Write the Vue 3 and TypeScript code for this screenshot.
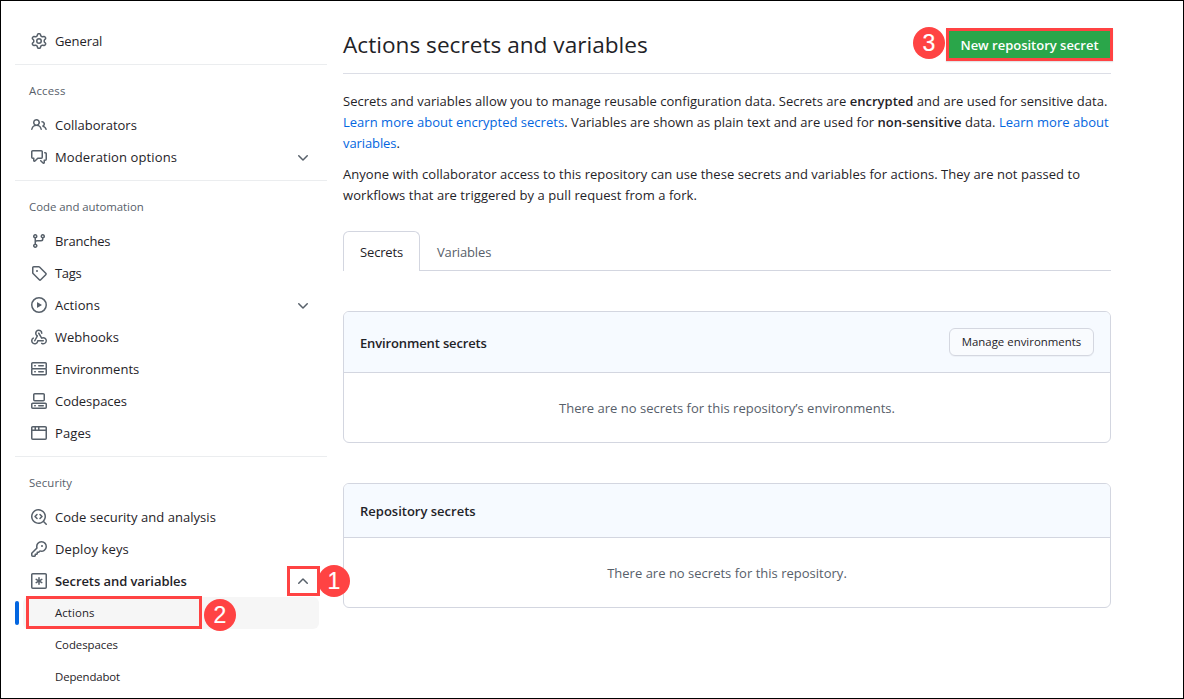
<script setup lang="ts">
interface NavItem {
  label: string
  icon: keyof typeof icons
  ls: number
  toggle?: 'down' | 'up'
  bold?: boolean
}
interface NavGroup {
  title?: string
  titleLs?: number
  items: NavItem[]
}

const icons = {
  gear: ['M8 0a8.2 8.2 0 0 1 .701.031C9.444.095 9.99.645 10.16 1.29l.288 1.107c.018.066.079.158.212.224.231.114.454.243.668.386.123.082.233.09.299.071l1.103-.303c.644-.176 1.392.021 1.82.63.27.385.506.792.704 1.218.315.675.111 1.422-.364 1.891l-.814.806c-.049.048-.098.147-.088.294.016.257.016.515 0 .772-.01.147.038.246.088.294l.814.806c.475.469.679 1.216.364 1.891a7.977 7.977 0 0 1-.704 1.217c-.428.61-1.176.807-1.82.63l-1.102-.302c-.067-.019-.177-.011-.3.071a5.909 5.909 0 0 1-.668.386c-.133.066-.194.158-.211.224l-.29 1.106c-.168.646-.715 1.196-1.458 1.26a8.006 8.006 0 0 1-1.402 0c-.743-.064-1.289-.614-1.458-1.26l-.289-1.106c-.018-.066-.079-.158-.212-.224a5.738 5.738 0 0 1-.668-.386c-.123-.082-.233-.09-.299-.071l-1.103.303c-.644.176-1.392-.021-1.82-.63a8.12 8.12 0 0 1-.704-1.218c-.315-.675-.111-1.422.363-1.891l.815-.806c.05-.048.098-.147.088-.294a6.214 6.214 0 0 1 0-.772c.01-.147-.038-.246-.088-.294l-.815-.806C.635 6.045.431 5.298.746 4.623a7.92 7.92 0 0 1 .704-1.217c.428-.61 1.176-.807 1.82-.63l1.102.302c.067.019.177.011.3-.071.214-.143.437-.272.668-.386.133-.066.194-.158.211-.224l.29-1.106C6.009.645 6.556.095 7.299.03 7.53.01 7.764 0 8 0Zm-.571 1.525c-.036.003-.108.036-.137.146l-.289 1.105c-.147.561-.549.967-.998 1.189-.173.086-.34.183-.5.29-.417.278-.97.423-1.529.27l-1.103-.303c-.109-.03-.175.016-.195.045-.22.312-.412.644-.573.99-.014.031-.021.11.059.19l.815.806c.411.406.562.957.53 1.456a4.709 4.709 0 0 0 0 .582c.032.499-.119 1.05-.53 1.456l-.815.806c-.081.08-.073.159-.059.19.162.346.353.677.573.989.02.03.085.076.195.046l1.102-.303c.56-.153 1.113-.008 1.53.27.161.107.328.204.501.29.447.222.85.629.997 1.189l.289 1.105c.029.109.101.143.137.146a6.6 6.6 0 0 0 1.142 0c.036-.003.108-.036.137-.146l.289-1.105c.147-.561.549-.967.998-1.189.173-.086.34-.183.5-.29.417-.278.97-.423 1.529-.27l1.103.303c.109.029.175-.016.195-.045.22-.313.411-.644.573-.99.014-.031.021-.11-.059-.19l-.815-.806c-.411-.406-.562-.957-.53-1.456a4.709 4.709 0 0 0 0-.582c-.032-.499.119-1.05.53-1.456l.815-.806c.081-.08.073-.159.059-.19a6.464 6.464 0 0 0-.573-.989c-.02-.03-.085-.076-.195-.046l-1.102.303c-.56.153-1.113.008-1.53-.27a4.44 4.44 0 0 0-.501-.29c-.447-.222-.85-.629-.997-1.189l-.289-1.105c-.029-.11-.101-.143-.137-.146a6.6 6.6 0 0 0-1.142 0ZM11 8a3 3 0 1 1-6 0 3 3 0 0 1 6 0ZM9.5 8a1.5 1.5 0 1 0-3.001.001A1.5 1.5 0 0 0 9.5 8Z'],
  people: ['M2 5.5a3.5 3.5 0 1 1 5.898 2.549 5.508 5.508 0 0 1 3.034 4.084.75.75 0 1 1-1.482.235 4 4 0 0 0-7.9 0 .75.75 0 0 1-1.482-.236A5.507 5.507 0 0 1 3.102 8.05 3.493 3.493 0 0 1 2 5.5ZM11 4a3.001 3.001 0 0 1 2.22 5.018 5.01 5.01 0 0 1 2.56 3.012.749.749 0 0 1-.885.954.752.752 0 0 1-.549-.514 3.507 3.507 0 0 0-2.522-2.372.75.75 0 0 1-.574-.73v-.352a.75.75 0 0 1 .416-.672A1.5 1.5 0 0 0 11 5.5.75.75 0 0 1 11 4Zm-5.5-.5a2 2 0 1 0-.001 3.999A2 2 0 0 0 5.5 3.5Z'],
  discussion: ['M1.75 1h8.5c.966 0 1.75.784 1.75 1.75v5.5A1.75 1.75 0 0 1 10.25 10H7.061l-2.574 2.573A1.458 1.458 0 0 1 2 11.543V10h-.25A1.75 1.75 0 0 1 0 8.25v-5.5C0 1.784.784 1 1.75 1ZM1.5 2.75v5.5c0 .138.112.25.25.25h1a.75.75 0 0 1 .75.75v2.19l2.72-2.72a.749.749 0 0 1 .53-.22h3.5a.25.25 0 0 0 .25-.25v-5.5a.25.25 0 0 0-.25-.25h-8.5a.25.25 0 0 0-.25.25Zm13 2a.25.25 0 0 0-.25-.25h-.5a.75.75 0 0 1 0-1.5h.5c.966 0 1.75.784 1.75 1.75v5.5A1.75 1.75 0 0 1 14.25 12H14v1.543a1.458 1.458 0 0 1-2.487 1.03L9.22 12.28a.749.749 0 0 1 .326-1.275.749.749 0 0 1 .734.215l2.22 2.22v-2.19a.75.75 0 0 1 .75-.75h1a.25.25 0 0 0 .25-.25Z'],
  branch: ['M9.5 3.25a2.25 2.25 0 1 1 3 2.122V6A2.5 2.5 0 0 1 10 8.5H6a1 1 0 0 0-1 1v1.128a2.251 2.251 0 1 1-1.5 0V5.372a2.25 2.25 0 1 1 1.5 0v1.836A2.493 2.493 0 0 1 6 7h4a1 1 0 0 0 1-1v-.628A2.25 2.25 0 0 1 9.5 3.25Zm-6 0a.75.75 0 1 0 1.5 0 .75.75 0 0 0-1.5 0Zm8.25-.75a.75.75 0 1 0 0 1.5.75.75 0 0 0 0-1.5ZM4.25 12a.75.75 0 1 0 0 1.5.75.75 0 0 0 0-1.5Z'],
  tag: ['M1 7.775V2.75C1 1.784 1.784 1 2.75 1h5.025c.464 0 .91.184 1.238.513l6.25 6.25a1.75 1.75 0 0 1 0 2.474l-5.026 5.026a1.75 1.75 0 0 1-2.474 0l-6.25-6.25A1.752 1.752 0 0 1 1 7.775Zm1.5 0c0 .066.026.13.073.177l6.25 6.25a.25.25 0 0 0 .354 0l5.025-5.025a.25.25 0 0 0 0-.354l-6.25-6.25a.25.25 0 0 0-.177-.073H2.75a.25.25 0 0 0-.25.25ZM6 5a1 1 0 1 1 0 2 1 1 0 0 1 0-2Z'],
  play: ['M8 0a8 8 0 1 1 0 16A8 8 0 0 1 8 0ZM1.5 8a6.5 6.5 0 1 0 13 0 6.5 6.5 0 0 0-13 0Zm4.879-2.773 4.264 2.559a.25.25 0 0 1 0 .428l-4.264 2.559A.25.25 0 0 1 6 10.559V5.442a.25.25 0 0 1 .379-.215Z'],
  webhook: [
    'M5.5 4.25a2.25 2.25 0 0 1 4.5 0 .75.75 0 0 0 1.5 0 3.75 3.75 0 1 0-6.14 2.889l-2.272 4.258a.75.75 0 0 0 1.324.706L7 7.25a.75.75 0 0 0-.309-1.015A2.25 2.25 0 0 1 5.5 4.25Z',
    'M7.364 3.607a.75.75 0 0 1 1.03.257l2.608 4.349a3.75 3.75 0 1 1-.628 6.785.75.75 0 0 1 .752-1.299 2.25 2.25 0 1 0-.033-3.88.75.75 0 0 1-1.03-.256L7.107 4.636a.75.75 0 0 1 .257-1.03Z',
    'M2.9 8.776A.75.75 0 0 1 2.625 9.8 2.25 2.25 0 1 0 6 11.75a.75.75 0 0 1 .75-.751h5.5a.75.75 0 0 1 0 1.5H7.425a3.751 3.751 0 1 1-5.55-3.998.75.75 0 0 1 1.024.274Z',
  ],
  server: ['M1.75 1h12.5c.966 0 1.75.784 1.75 1.75v4c0 .372-.116.717-.314 1 .198.283.314.628.314 1v4a1.75 1.75 0 0 1-1.75 1.75H1.75A1.75 1.75 0 0 1 0 12.75v-4c0-.358.109-.707.314-1a1.739 1.739 0 0 1-.314-1v-4C0 1.784.784 1 1.75 1ZM1.5 2.75v4c0 .138.112.25.25.25h12.5a.25.25 0 0 0 .25-.25v-4a.25.25 0 0 0-.25-.25H1.75a.25.25 0 0 0-.25.25Zm.25 5.75a.25.25 0 0 0-.25.25v4c0 .138.112.25.25.25h12.5a.25.25 0 0 0 .25-.25v-4a.25.25 0 0 0-.25-.25ZM7 4.75A.75.75 0 0 1 7.75 4h4.5a.75.75 0 0 1 0 1.5h-4.5A.75.75 0 0 1 7 4.75ZM7.75 10h4.5a.75.75 0 0 1 0 1.5h-4.5a.75.75 0 0 1 0-1.5ZM3 4.75A.75.75 0 0 1 3.75 4h.5a.75.75 0 0 1 0 1.5h-.5A.75.75 0 0 1 3 4.75ZM3.75 10h.5a.75.75 0 0 1 0 1.5h-.5a.75.75 0 0 1 0-1.5Z'],
  codespaces: [
    'M0 11.25c0-.966.784-1.75 1.75-1.75h12.5c.966 0 1.75.784 1.75 1.75v3A1.75 1.75 0 0 1 14.25 16H1.75A1.75 1.75 0 0 1 0 14.25Zm2-9.5C2 .784 2.784 0 3.75 0h8.5C13.216 0 14 .784 14 1.75v5a1.75 1.75 0 0 1-1.75 1.75h-8.5A1.75 1.75 0 0 1 2 6.75Zm1.75-.25a.25.25 0 0 0-.25.25v5c0 .138.112.25.25.25h8.5a.25.25 0 0 0 .25-.25v-5a.25.25 0 0 0-.25-.25Zm-2 9.5a.25.25 0 0 0-.25.25v3c0 .138.112.25.25.25h12.5a.25.25 0 0 0 .25-.25v-3a.25.25 0 0 0-.25-.25Z',
    'M7 12.75a.75.75 0 0 1 .75-.75h4.5a.75.75 0 0 1 0 1.5h-4.5a.75.75 0 0 1-.75-.75Zm-4 0a.75.75 0 0 1 .75-.75h.5a.75.75 0 0 1 0 1.5h-.5a.75.75 0 0 1-.75-.75Z',
  ],
  browser: ['M0 2.75C0 1.784.784 1 1.75 1h12.5c.966 0 1.75.784 1.75 1.75v10.5A1.75 1.75 0 0 1 14.25 15H1.75A1.75 1.75 0 0 1 0 13.25ZM14.5 6h-13v7.25c0 .138.112.25.25.25h12.5a.25.25 0 0 0 .25-.25Zm-6-3.5v2h6V2.75a.25.25 0 0 0-.25-.25ZM5 2.5v2h2v-2Zm-3.25 0a.25.25 0 0 0-.25.25V4.5h2v-2Z'],
  codescan: [
    'M8.47 4.97a.75.75 0 0 0 0 1.06L9.94 7.5 8.47 8.97a.75.75 0 1 0 1.06 1.06l2-2a.75.75 0 0 0 0-1.06l-2-2a.75.75 0 0 0-1.06 0ZM6.53 6.03a.75.75 0 0 0-1.06-1.06l-2 2a.75.75 0 0 0 0 1.06l2 2a.75.75 0 1 0 1.06-1.06L5.06 7.5l1.47-1.47Z',
    'M12.246 13.307a7.5 7.5 0 1 1 1.06-1.06l2.474 2.473a.749.749 0 0 1-.326 1.275.749.749 0 0 1-.734-.215ZM1.5 7.5a6.002 6.002 0 0 0 3.608 5.504 6.002 6.002 0 0 0 6.486-1.117.748.748 0 0 1 .292-.293A6 6 0 1 0 1.5 7.5Z',
  ],
  key: ['M10.5 0a5.499 5.499 0 1 1-1.288 10.848l-.932.932a.749.749 0 0 1-.53.22H7v.75a.749.749 0 0 1-.22.53l-.5.5a.749.749 0 0 1-.53.22H5v.75a.749.749 0 0 1-.22.53l-.5.5a.749.749 0 0 1-.53.22h-2A1.75 1.75 0 0 1 0 14.25v-2c0-.199.079-.389.22-.53l4.932-4.932A5.5 5.5 0 0 1 10.5 0Zm-4 5.5c-.001.431.069.86.205 1.269a.75.75 0 0 1-.181.768L1.5 12.56v1.69c0 .138.112.25.25.25h1.69l.06-.06v-1.19a.75.75 0 0 1 .75-.75h1.19l.06-.06v-1.19a.75.75 0 0 1 .75-.75h1.19l1.023-1.025a.75.75 0 0 1 .768-.18A4 4 0 1 0 6.5 5.5ZM11 6a1 1 0 1 1 0-2 1 1 0 0 1 0 2Z'],
  asterisk: [
    'M1.75 0h12.5C15.216 0 16 .784 16 1.75v12.5A1.75 1.75 0 0 1 14.25 16H1.75A1.75 1.75 0 0 1 0 14.25V1.75C0 .784.784 0 1.75 0ZM1.5 1.75v12.5c0 .138.112.25.25.25h12.5a.25.25 0 0 0 .25-.25V1.75a.25.25 0 0 0-.25-.25H1.75a.25.25 0 0 0-.25.25Z',
    'M8 4a.75.75 0 0 1 .75.75V6.7l1.69-.975a.75.75 0 0 1 .75 1.3L9.5 8l1.69.976a.75.75 0 0 1-.75 1.298L8.75 9.3v1.951a.75.75 0 0 1-1.5 0V9.299l-1.69.976a.75.75 0 0 1-.75-1.3L6.5 8l-1.69-.975a.75.75 0 0 1 .75-1.3l1.69.976V4.75A.75.75 0 0 1 8 4Z',
  ],
}

const chevron =
  'M12.78 5.22a.749.749 0 0 1 0 1.06l-4.25 4.25a.749.749 0 0 1-1.06 0L3.22 6.28a.749.749 0 1 1 1.06-1.06L8 8.939l3.72-3.719a.749.749 0 0 1 1.06 0Z'

const groups: NavGroup[] = [
  { items: [{ label: 'General', icon: 'gear', ls: -0.08 }] },
  {
    title: 'Access',
    titleLs: 0.2,
    items: [
      { label: 'Collaborators', icon: 'people', ls: -0.02 },
      { label: 'Moderation options', icon: 'discussion', ls: 0.11, toggle: 'down' },
    ],
  },
  {
    title: 'Code and automation',
    titleLs: -0.04,
    items: [
      { label: 'Branches', icon: 'branch', ls: -0.15 },
      { label: 'Tags', icon: 'tag', ls: -0.3 },
      { label: 'Actions', icon: 'play', ls: 0.08, toggle: 'down' },
      { label: 'Webhooks', icon: 'webhook', ls: 0 },
      { label: 'Environments', icon: 'server', ls: 0 },
      { label: 'Codespaces', icon: 'codespaces', ls: -0.04 },
      { label: 'Pages', icon: 'browser', ls: 0.1 },
    ],
  },
  {
    title: 'Security',
    titleLs: 0.08,
    items: [
      { label: 'Code security and analysis', icon: 'codescan', ls: 0.04 },
      { label: 'Deploy keys', icon: 'key', ls: 0.12 },
      { label: 'Secrets and variables', icon: 'asterisk', ls: -0.07, toggle: 'up', bold: true },
    ],
  },
]

const subItems = [
  { label: 'Actions', ls: 0.1, active: true },
  { label: 'Codespaces', ls: -0.05, active: false },
  { label: 'Dependabot', ls: -0.12, active: false },
]

const spacing = (v = 0) => ({ letterSpacing: `${v}px` })
</script>

<template>
  <div class="page">
    <nav class="sidebar">
      <section v-for="(group, g) in groups" :key="g" class="group">
        <h2 v-if="group.title" class="group-title" :style="spacing(group.titleLs)">{{ group.title }}</h2>
        <a v-for="item in group.items" :key="item.label" class="item" :class="{ bold: item.bold }">
          <svg class="icon" viewBox="0 0 16 16">
            <path v-for="(d, i) in icons[item.icon]" :key="i" :d="d" />
          </svg>
          <span class="label" :style="spacing(item.ls)">{{ item.label }}</span>
          <span v-if="item.toggle" class="toggle">
            <svg class="icon" :class="item.toggle === 'up' ? 'flipped' : 'lowered'" viewBox="0 0 16 16">
              <path :d="chevron" />
            </svg>
            <span v-if="item.toggle === 'up'" class="outline outline-toggle"></span>
            <span v-if="item.toggle === 'up'" class="marker marker-one">1</span>
          </span>
        </a>
      </section>
      <a v-for="sub in subItems" :key="sub.label" class="sub" :class="{ active: sub.active }">
        <span class="sub-label" :style="spacing(sub.ls)">{{ sub.label }}</span>
        <template v-if="sub.active">
          <span class="outline outline-sub"></span>
          <span class="marker marker-two">2</span>
        </template>
      </a>
    </nav>

    <main class="content">
      <header class="header">
        <h1>Actions secrets and variables</h1>
        <button class="primary">
          New repository secret
          <span class="marker marker-three">3</span>
        </button>
      </header>

      <div class="intro">
        <p>
          <span class="line l1">Secrets and variables allow you to manage reusable configuration data. Secrets are <b>encrypted</b> and are used for sensitive data.</span>
          <span class="line l2"><a>Learn more about encrypted secrets</a>. Variables are shown as plain text and are used for <b>non-sensitive</b> data. <a>Learn more about</a></span>
          <span class="line l3"><a>variables</a>.</span>
        </p>
        <p>
          <span class="line l4">Anyone with collaborator access to this repository can use these secrets and variables for actions. They are not passed to</span>
          <span class="line l5">workflows that are triggered by a pull request from a fork.</span>
        </p>
      </div>

      <div class="tabs">
        <a class="tab selected">Secrets</a>
        <a class="tab">Variables</a>
      </div>

      <section class="card">
        <div class="card-head tall">
          <h3 class="env">Environment secrets</h3>
          <button class="secondary">Manage environments</button>
        </div>
        <div class="card-body">There are no secrets for this repository’s environments.</div>
      </section>

      <section class="card">
        <div class="card-head">
          <h3>Repository secrets</h3>
        </div>
        <div class="card-body">There are no secrets for this repository.</div>
      </section>
    </main>
  </div>
</template>

<style>
body {
  margin: 0;
}
</style>

<style scoped>
.page {
  box-sizing: border-box;
  width: 1184px;
  height: 699px;
  border: 1px solid #000;
  background: #fff;
  color: #1f2328;
  font-family: "Open Sans", "Noto Sans", sans-serif;
  font-size: 13px;
  display: flex;
  gap: 16px;
  padding-left: 14px;
  overflow: hidden;
}
.sidebar {
  width: 312px;
  padding-top: 24px;
  flex: none;
}
.group + .group {
  margin-top: 7px;
  border-top: 1px solid #ebedef;
}
.group-title {
  margin: 0;
  height: 44px;
  line-height: 51px;
  padding-left: 14px;
  font-size: 11.4px;
  font-weight: 400;
  color: #57606a;
}
.item {
  display: flex;
  align-items: center;
  height: 32px;
  padding: 0 16px;
}
.icon {
  width: 16px;
  height: 16px;
  flex: none;
  fill: #57606a;
  display: block;
}
.flipped {
  transform: scaleY(-1);
}
.lowered {
  margin-top: 1px;
}
.label {
  flex: 1;
  margin-left: 8px;
  line-height: 20px;
}
.bold {
  font-weight: 600;
}
.toggle {
  position: relative;
}
.outline {
  position: absolute;
  box-sizing: border-box;
  border: 3px solid #ff4343;
}
.outline-toggle {
  left: -8px;
  top: -7px;
  width: 33px;
  height: 30px;
}
.marker {
  position: absolute;
  width: 32px;
  height: 32px;
  border-radius: 50%;
  background: #ff4343;
  color: #fff;
  font: 400 23px/33px "Liberation Sans", Arial, sans-serif;
  letter-spacing: 0;
  text-align: center;
  -webkit-text-stroke: 0.2px #fff;
}
.marker-one {
  left: 23px;
  top: -8px;
}
.sub {
  display: flex;
  align-items: center;
  position: relative;
  height: 32px;
  width: 264px;
  padding-left: 40px;
  font-size: 11.4px;
}
.sub-label {
  margin-bottom: 2px;
}
.active {
  background: #f6f6f6;
  border-radius: 6px;
  margin-left: 8px;
  padding-left: 32px;
}
.active::before {
  content: "";
  position: absolute;
  left: -8px;
  top: 4px;
  width: 4px;
  height: 24px;
  border-radius: 6px;
  background: #0366e0;
}
.outline-sub {
  left: 3px;
  top: -1px;
  width: 176px;
  height: 33px;
}
.marker-two {
  left: 181px;
  top: 2px;
}
.content {
  width: 768px;
  padding-top: 26px;
  flex: none;
}
.header {
  display: flex;
  justify-content: space-between;
  align-items: center;
  height: 46px;
  border-bottom: 1px solid #dcdee6;
}
h1 {
  margin: -11px 0 0;
  font-size: 22.6px;
  line-height: 36px;
  font-weight: 400;
  letter-spacing: 0.02px;
}
.primary {
  position: relative;
  box-sizing: border-box;
  width: 167px;
  height: 33px;
  margin: -11px -2px 0 0;
  padding: 0;
  border: 3px solid #ff4343;
  background: #2aa64a;
  color: #fff;
  font: 600 13px/29px "Open Sans", "Noto Sans", sans-serif;
  letter-spacing: -0.01px;
  box-shadow: 0 1px 1px rgba(31, 35, 40, 0.12);
}
.marker-three {
  left: -36px;
  top: -4px;
}
.intro {
  margin-top: 17px;
}
p {
  margin: 0 0 10px;
  line-height: 21px;
}
.line {
  display: block;
  white-space: nowrap;
}
.l1 {
  letter-spacing: 0.018px;
}
.l2 {
  letter-spacing: 0.018px;
}
.l3 {
  letter-spacing: -0.1px;
}
.l4 {
  letter-spacing: 0.045px;
}
.l5 {
  letter-spacing: 0.06px;
}
b {
  font-weight: 600;
}
p a {
  color: #0366e0;
}
.tabs {
  display: flex;
  height: 39px;
  margin-top: 25px;
  border-bottom: 1px solid #d3d6e0;
}
.tab {
  box-sizing: border-box;
  height: 40px;
  padding: 0 17px;
  line-height: 42px;
  color: #57606a;
  letter-spacing: -0.15px;
}
.selected {
  width: 77px;
  padding: 0 16px;
  line-height: 40px;
  color: #1f2328;
  background: #fff;
  border: 1px solid #d3d6e0;
  border-bottom: 0;
  border-radius: 6px 6px 0 0;
}
.card {
  margin-top: 40px;
  border: 1px solid #d3d6e0;
  border-radius: 6px;
  overflow: hidden;
}
.card-head {
  display: flex;
  justify-content: space-between;
  align-items: center;
  height: 53px;
  padding: 0 16px;
  background: #f6faff;
  border-bottom: 1px solid #d3d6e0;
}
.tall {
  height: 60px;
}
h3 {
  margin: 1px 0 0;
  font-size: 13px;
  line-height: 21px;
  font-weight: 600;
  letter-spacing: 0;
}
.env {
  margin-top: 3px;
  letter-spacing: -0.14px;
}
.secondary {
  box-sizing: border-box;
  width: 145px;
  height: 28px;
  padding: 0;
  border: 1px solid #d4d7e0;
  border-radius: 6px;
  background: #f9fbfe;
  color: #1f2328;
  font: 500 11.4px/26px "Open Sans", "Noto Sans", sans-serif;
  letter-spacing: 0.02px;
  box-shadow: 0 1px 0 rgba(31, 35, 40, 0.04);
}
.card-body {
  height: 69px;
  line-height: 70px;
  text-align: center;
  color: #57606a;
  letter-spacing: 0.01px;
}
</style>
